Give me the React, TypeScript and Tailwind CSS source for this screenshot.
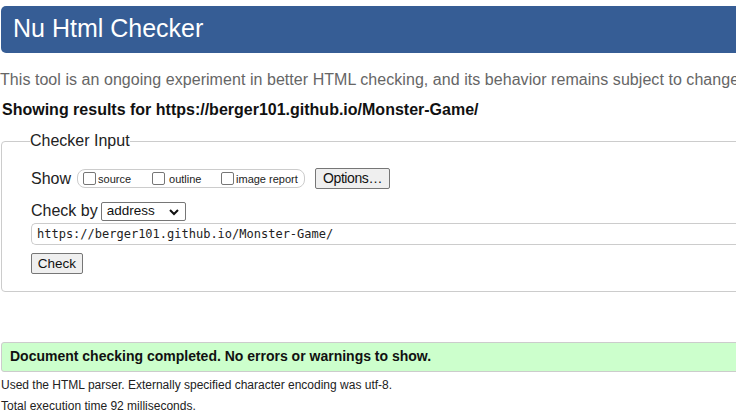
import React from "react";

function Cb() {
  return (
    <span className="inline-block w-[13px] h-[13px] border border-[#767676] rounded-[2px] bg-white shrink-0" />
  );
}

export default function App() {
  return (
    <div className="w-[736px] h-[417px] overflow-hidden bg-white" style={{ fontFamily: '"Liberation Sans", Arial, sans-serif' }}>
      <div className="w-[800px]">
        <div className="ml-[1px] mt-[6px] h-[47px] rounded-l-[5px] bg-[#365d95] flex items-center pl-[12px] pb-[2px]">
          <span className="text-white text-[25px] leading-none">Nu Html Checker</span>
        </div>
        <p className="mt-[17px] text-[16px] leading-[20px] text-[#666] whitespace-nowrap tracking-[0.05px]">
          This tool is an ongoing experiment in better HTML checking, and its behavior remains subject to change.
        </p>
        <p className="mt-[10px] ml-[2px] text-[16px] leading-[20px] font-bold text-[#111] whitespace-nowrap">
          Showing results for https://berger101.github.io/Monster-Game/
        </p>
        <fieldset className="mt-[12px] ml-[1px] border border-[#ccc] rounded-[4px] pl-[29px] pr-0 pb-[16px] pt-[17px]">
          <legend className="text-[16px] leading-[18px] text-[#222] -ml-[1px] px-0">Checker Input</legend>
          <div className="flex items-center h-[22px] text-[#222]">
            <span className="text-[16px] mr-[6px] mt-[1px]">Show</span>
            <div className="flex items-center h-[19px] w-[228px] border border-[#ccc] rounded-[8px] pl-[5px] text-[11px] whitespace-nowrap">
              <Cb />
              <span className="ml-[2px] mt-[3px] w-[54px]">source</span>
              <Cb />
              <span className="ml-[4px] mt-[3px] w-[52px]">outline</span>
              <Cb />
              <span className="ml-[2px] mt-[3px]">image report</span>
            </div>
            <button className="ml-[10px] h-[21px] w-[75px] border border-[#767676] rounded-[2px] bg-[#efefef] text-[14px] leading-none text-[#111] tracking-[-0.4px]">
              Options…
            </button>
          </div>
          <div className="flex items-center mt-[12px] h-[20px] text-[#222]">
            <span className="text-[16px] mr-[3px]">Check by</span>
            <div className="relative flex items-center h-[19px] w-[85px] border border-[#767676] rounded-[2px] bg-white pl-[5px] text-[13.5px] text-[#111]">
              address
              <svg className="absolute right-[6px] top-[6px]" width="10" height="7" viewBox="0 0 10 7">
                <path d="M1 1 L5 5 L9 1" stroke="#111" strokeWidth="2" fill="none" />
              </svg>
            </div>
          </div>
          <div className="mt-[2px] h-[22px] border border-[#ccc] rounded-l-[5px] border-r-0 flex items-center pl-[5px] text-[12px] text-[#222]" style={{ fontFamily: '"DejaVu Sans Mono", "Liberation Mono", monospace' }}>
            https://berger101.github.io/Monster-Game/
          </div>
          <button className="mt-[8px] h-[21px] w-[52px] border border-[#767676] rounded-[2px] bg-[#efefef] text-[13.5px] leading-none text-[#111]">
            Check
          </button>
        </fieldset>
        <div className="mt-[50px] ml-[1px] h-[30px] bg-[#ccffcc] border border-[#ccc] rounded-l-[3px] flex items-center pl-[8px] text-[14px] font-bold text-[#111] whitespace-nowrap">
          Document checking completed. No errors or warnings to show.
        </div>
        <p className="mt-[5px] ml-[1px] text-[12px] leading-[16px] text-[#222]">
          Used the HTML parser. Externally specified character encoding was utf-8.
        </p>
        <p className="mt-[5px] ml-[1px] text-[12px] leading-[16px] text-[#222]">
          Total execution time 92 milliseconds.
        </p>
      </div>
    </div>
  );
}
